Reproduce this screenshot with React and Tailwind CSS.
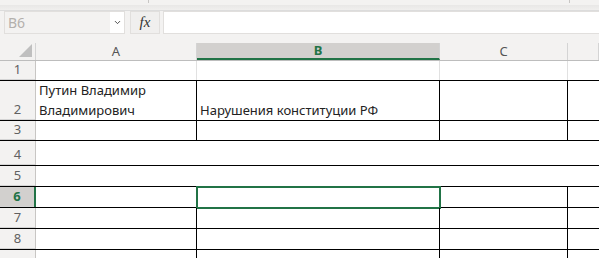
import { ChevronDown } from 'lucide-react'

const cols = [
  { id: 'A', w: 'w-[161px]' },
  { id: 'B', w: 'w-[243px]' },
  { id: 'C', w: 'w-[128px]' },
  { id: 'D', w: 'flex-1' },
]

// v: style of vertical lines inside the row
const rows = [
  { n: 1, h: 'h-[20px]', v: 'gray' },
  { n: 2, h: 'h-[40px]', v: 'black', cells: ['Путин Владимир\nВладимирович', 'Нарушения конституции РФ'] },
  { n: 3, h: 'h-[20px]', v: 'black' },
  { n: 4, h: 'h-[25px]', v: 'none' },
  { n: 5, h: 'h-[21px]', v: 'none' },
  { n: 6, h: 'h-[21px]', v: 'black', active: true },
  { n: 7, h: 'h-[21px]', v: 'black' },
  { n: 8, h: 'h-[21px]', v: 'black' },
  { n: 9, h: 'h-[21px]', v: 'black', last: true },
]

const vLine = {
  gray: 'border-r border-[#e1e1e1]',
  black: 'border-r border-black',
  none: '',
}

function FormulaBar() {
  return (
    <div className="bg-[#f3f2f1]">
      <div className="relative h-[5px]">
        <div className="absolute left-[148px] top-0 h-[3px] w-px bg-[#c8c6c4]" />
        <div className="absolute left-[569px] top-0 h-[3px] w-px bg-[#c8c6c4]" />
      </div>
      <div className="h-[6px] border-b border-[#dcdcdc] bg-gradient-to-b from-[#e8e7e6] to-[#f0efee]" />
      <div className="flex h-[23px] items-stretch">
        <div className="ml-[4px] flex w-[121px] border border-[#e1dfdd]">
          <div className="flex flex-1 items-center pl-[3px] text-[14px] text-[#b3b0ad]">B6</div>
          <div className="flex w-[14px] items-center justify-center bg-white">
            <ChevronDown size={9} strokeWidth={2.5} className="text-[#444]" />
          </div>
        </div>
        <div className="ml-[5px] flex w-[30px] items-center justify-center border border-[#e1dfdd] bg-[#f0efee] font-['Liberation_Serif',serif] text-[15px] italic text-[#333]">
          fx
        </div>
        <div className="ml-[3px] flex-1 border-y border-l border-[#e1dfdd] bg-white" />
      </div>
      <div className="h-[9px]" />
    </div>
  )
}

function Header() {
  return (
    <div className="flex h-[18px] border-b border-[#bdbdbd] bg-[#f3f2f1] text-[13px]">
      <div className="relative w-[36px] border-r border-[#d4d4d4]">
        <div className="absolute bottom-[3px] right-[3px] h-0 w-0 border-b-[13px] border-l-[13px] border-b-[#bfbfbf] border-l-transparent" />
      </div>
      {cols.map((c) =>
        c.id === 'B' ? (
          <div key={c.id} className={`${c.w} flex items-center justify-center border-b-2 border-r border-b-[#217346] border-r-[#d4d4d4] bg-[#d2d0ce] font-bold text-[#217346]`}>
            {c.id}
          </div>
        ) : (
          <div key={c.id} className={`${c.w} flex items-center justify-center border-r border-[#d4d4d4] text-[#555]`}>
            {c.id === 'D' ? '' : c.id}
          </div>
        )
      )}
    </div>
  )
}

function Row({ r }) {
  return (
    <div className={`flex ${r.h} ${r.last ? '' : 'border-b border-black'}`}>
      <div
        className={`flex w-[36px] shrink-0 items-end justify-center pb-[1px] text-[13px] ${
          r.active
            ? 'border-r-2 border-[#217346] bg-[#d2d0ce] font-bold text-[#217346]'
            : 'border-r border-[#c8c6c4] bg-[#f3f2f1] text-[#616161]'
        } ${r.last ? '' : 'shadow-[inset_0_-1px_0_#d4d4d4]'}`}
      >
        {r.last ? '' : r.n}
      </div>
      {cols.map((c, i) => (
        <div
          key={c.id}
          className={`relative ${c.w} ${c.id !== 'D' ? vLine[r.v] : ''} flex items-end whitespace-pre-line px-[3px] text-[13px] leading-[20px] text-[#222]`}
        >
          {r.cells?.[i]}
          {r.active && c.id === 'B' && (
            <div className="pointer-events-none absolute -bottom-[2px] -left-[1px] -right-[2px] -top-[1px] border-2 border-[#217346]" />
          )}
        </div>
      ))}
    </div>
  )
}

export default function App() {
  return (
    <div className="h-[258px] w-[599px] overflow-hidden bg-white font-['Noto_Sans',sans-serif]">
      <FormulaBar />
      <Header />
      {rows.map((r) => (
        <Row key={r.n} r={r} />
      ))}
    </div>
  )
}
